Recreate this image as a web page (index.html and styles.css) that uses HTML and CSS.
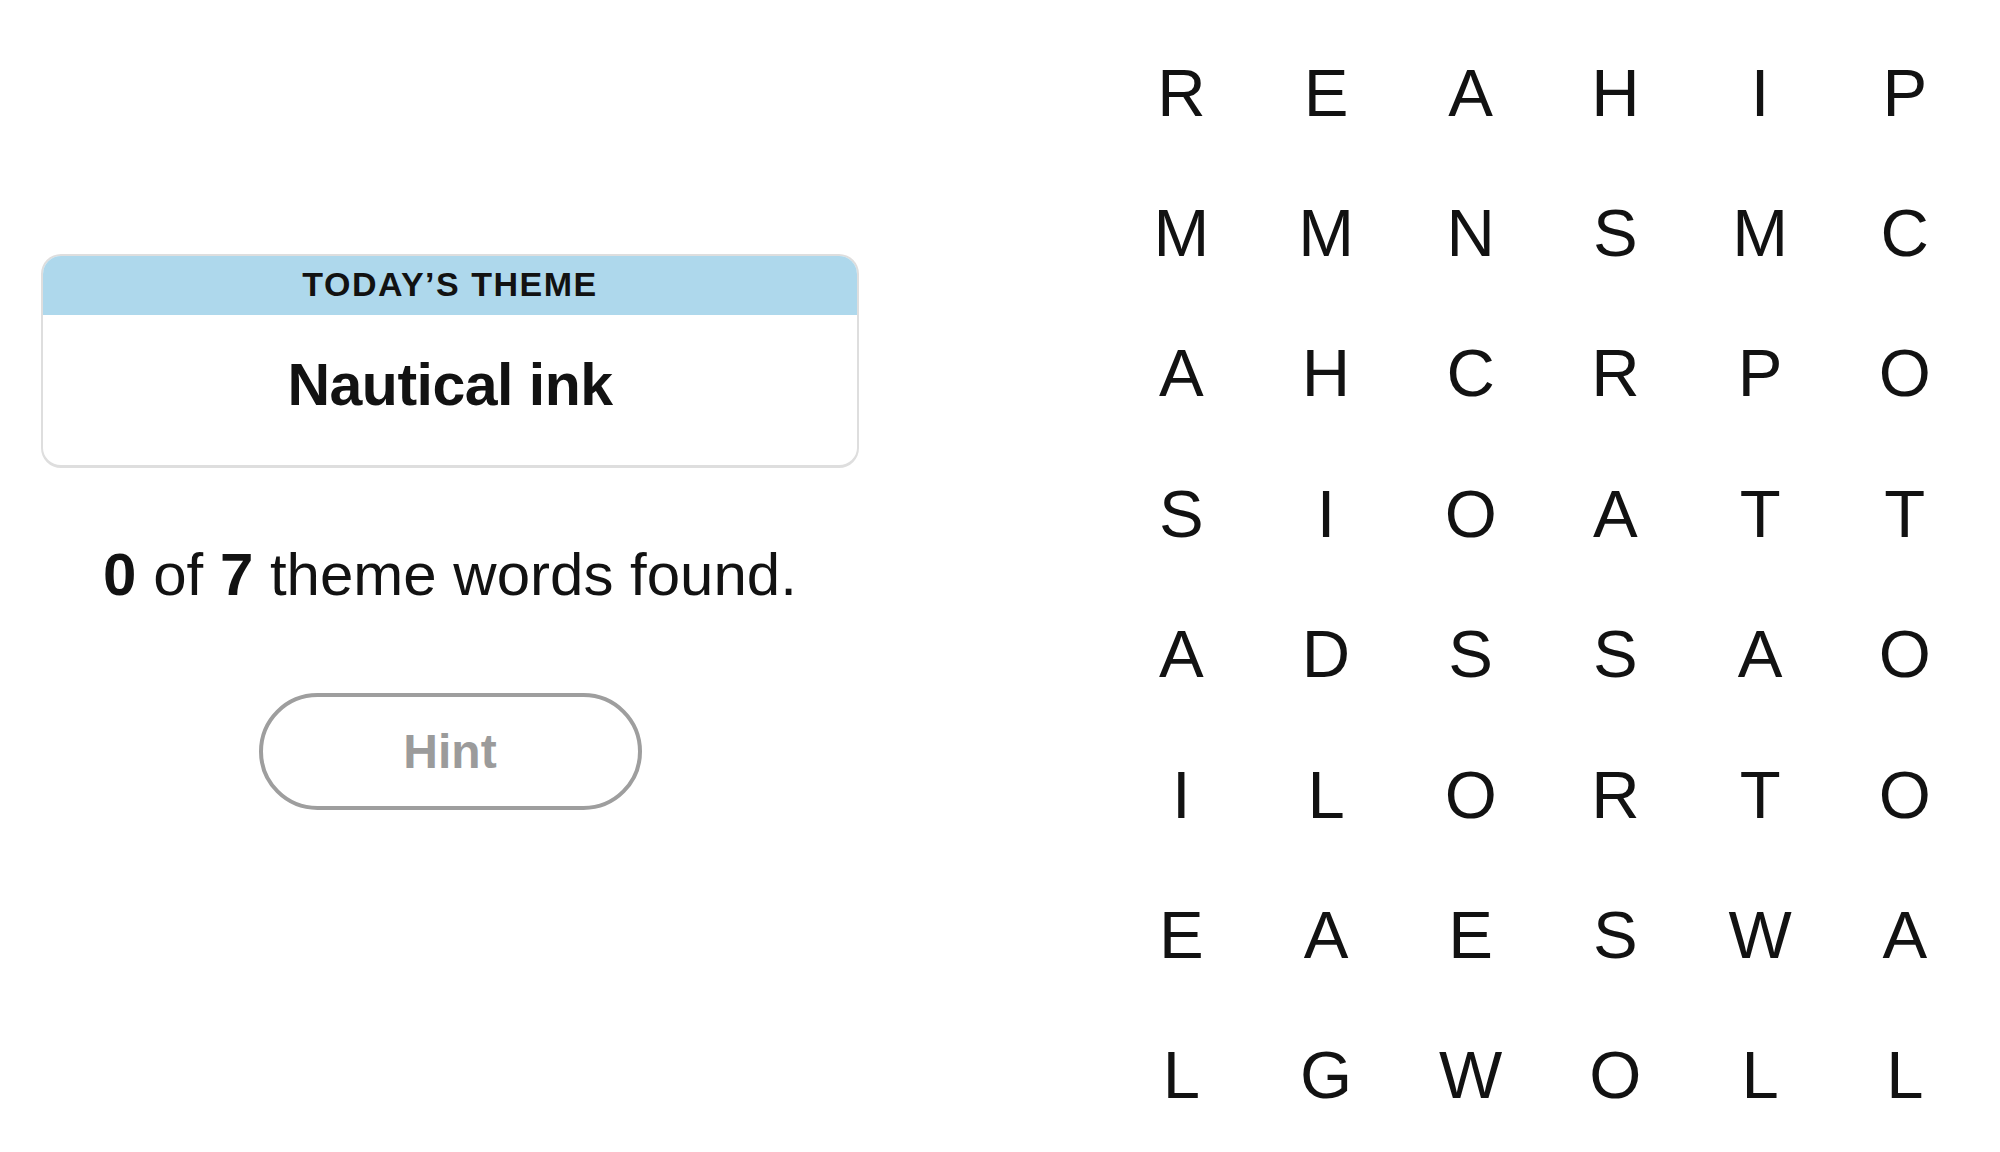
FILE: index.html
```html
<!DOCTYPE html>
<html lang="en">
<head>
<meta charset="utf-8">
<title>Strands</title>
<link rel="stylesheet" href="styles.css">
</head>
<body>
<div class="page">
  <section class="left">
    <div class="theme-card">
      <div class="theme-head">TODAY’S THEME</div>
      <div class="theme-body">Nautical ink</div>
    </div>
    <p class="progress"><b>0</b> of <b>7</b> theme words found.</p>
    <button class="hint" type="button">Hint</button>
  </section>
  <section class="board">
    <div class="cell">R</div><div class="cell">E</div><div class="cell">A</div><div class="cell">H</div><div class="cell">I</div><div class="cell">P</div>
    <div class="cell">M</div><div class="cell">M</div><div class="cell">N</div><div class="cell">S</div><div class="cell">M</div><div class="cell">C</div>
    <div class="cell">A</div><div class="cell">H</div><div class="cell">C</div><div class="cell">R</div><div class="cell">P</div><div class="cell">O</div>
    <div class="cell">S</div><div class="cell">I</div><div class="cell">O</div><div class="cell">A</div><div class="cell">T</div><div class="cell">T</div>
    <div class="cell">A</div><div class="cell">D</div><div class="cell">S</div><div class="cell">S</div><div class="cell">A</div><div class="cell">O</div>
    <div class="cell">I</div><div class="cell">L</div><div class="cell">O</div><div class="cell">R</div><div class="cell">T</div><div class="cell">O</div>
    <div class="cell">E</div><div class="cell">A</div><div class="cell">E</div><div class="cell">S</div><div class="cell">W</div><div class="cell">A</div>
    <div class="cell">L</div><div class="cell">G</div><div class="cell">W</div><div class="cell">O</div><div class="cell">L</div><div class="cell">L</div>
  </section>
</div>
</body>
</html>
```

FILE: styles.css
```css
html, body {
  margin: 0;
  padding: 0;
  background: #ffffff;
}

body {
  font-family: "Liberation Sans", Arial, sans-serif;
  color: #121212;
  width: 2000px;
  height: 1152px;
  overflow: hidden;
}

.page {
  display: flex;
  align-items: flex-start;
}

.left {
  width: 900px;
  padding-top: 254px;
  display: flex;
  flex-direction: column;
  align-items: center;
}

.theme-card {
  width: 818px;
  box-sizing: border-box;
  border: 2px solid #dedede;
  border-bottom-width: 3px;
  border-radius: 20px;
  overflow: hidden;
  background: #ffffff;
}

.theme-head {
  height: 61px;
  margin: -2px -2px 0 -2px;
  background: #aed8ec;
  display: flex;
  align-items: center;
  justify-content: center;
  font-size: 34px;
  font-weight: 700;
  letter-spacing: 1.5px;
  color: #121212;
}

.theme-body {
  height: 150px;
  box-sizing: border-box;
  padding-top: 40px;
  text-align: center;
  font-size: 59px;
  line-height: 60px;
  font-weight: 700;
  letter-spacing: -0.5px;
  color: #121212;
}

.progress {
  margin: 77px 0 0 0;
  font-size: 60px;
  line-height: 60px;
  text-align: center;
  color: #121212;
}

.progress b {
  font-weight: 700;
}

.hint {
  margin-top: 88px;
  width: 383px;
  height: 117px;
  box-sizing: border-box;
  border: 4px solid #9e9e9e;
  border-radius: 60px;
  background: #ffffff;
  color: #9b9b9b;
  font-family: "Liberation Sans", Arial, sans-serif;
  font-size: 48px;
  font-weight: 700;
  display: flex;
  align-items: center;
  justify-content: center;
  padding: 0;
}

.board {
  margin-left: 209px;
  margin-top: 22px;
  display: grid;
  grid-template-columns: repeat(6, 144.7px);
  grid-template-rows: repeat(8, 140.4px);
}

.cell {
  display: flex;
  align-items: center;
  justify-content: center;
  font-size: 67px;
  color: #121212;
}
```
